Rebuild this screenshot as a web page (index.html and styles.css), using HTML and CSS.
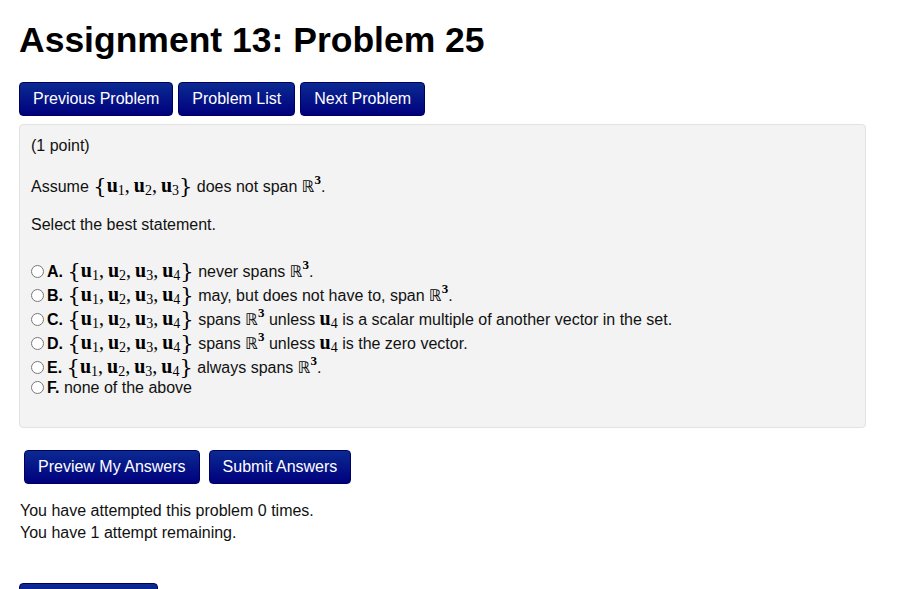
FILE: index.html
```html
<!DOCTYPE html>
<html lang="en">
<head>
  <meta charset="UTF-8">
  <title>Assignment 13: Problem 25</title>
  <link rel="stylesheet" href="styles.css">
</head>
<body>
  <h1>Assignment 13: Problem 25</h1>
  <div class="nav">
    <button class="btn">Previous Problem</button>
    <button class="btn">Problem List</button>
    <button class="btn">Next Problem</button>
  </div>

  <div class="problem">
    <p class="points">(1 point)</p>
    <p>Assume <span class="math"><span class="br">{</span><b>u</b><sub>1</sub><i>,</i><b>u</b><sub>2</sub><i>,</i><b>u</b><sub>3</sub><span class="br">}</span></span> does not span <span class="math"><span class="bb">ℝ</span><sup>3</sup></span>.</p>
    <p>Select the best statement.</p>

    <div class="choices">
      <label class="choice"><input type="radio" name="ans"><b class="letter">A.</b> <span class="math"><span class="br">{</span><b>u</b><sub>1</sub><i>,</i><b>u</b><sub>2</sub><i>,</i><b>u</b><sub>3</sub><i>,</i><b>u</b><sub>4</sub><span class="br">}</span></span> never spans <span class="math"><span class="bb">ℝ</span><sup>3</sup></span>.</label>
      <label class="choice"><input type="radio" name="ans"><b class="letter">B.</b> <span class="math"><span class="br">{</span><b>u</b><sub>1</sub><i>,</i><b>u</b><sub>2</sub><i>,</i><b>u</b><sub>3</sub><i>,</i><b>u</b><sub>4</sub><span class="br">}</span></span> may, but does not have to, span <span class="math"><span class="bb">ℝ</span><sup>3</sup></span>.</label>
      <label class="choice"><input type="radio" name="ans"><b class="letter">C.</b> <span class="math"><span class="br">{</span><b>u</b><sub>1</sub><i>,</i><b>u</b><sub>2</sub><i>,</i><b>u</b><sub>3</sub><i>,</i><b>u</b><sub>4</sub><span class="br">}</span></span> spans <span class="math"><span class="bb">ℝ</span><sup>3</sup></span> unless <span class="math"><b>u</b><sub>4</sub></span> is a scalar multiple of another vector in the set.</label>
      <label class="choice"><input type="radio" name="ans"><b class="letter">D.</b> <span class="math"><span class="br">{</span><b>u</b><sub>1</sub><i>,</i><b>u</b><sub>2</sub><i>,</i><b>u</b><sub>3</sub><i>,</i><b>u</b><sub>4</sub><span class="br">}</span></span> spans <span class="math"><span class="bb">ℝ</span><sup>3</sup></span> unless <span class="math"><b>u</b><sub>4</sub></span> is the zero vector.</label>
      <label class="choice"><input type="radio" name="ans"><b class="letter">E.</b> <span class="math"><span class="br">{</span><b>u</b><sub>1</sub><i>,</i><b>u</b><sub>2</sub><i>,</i><b>u</b><sub>3</sub><i>,</i><b>u</b><sub>4</sub><span class="br">}</span></span> always spans <span class="math"><span class="bb">ℝ</span><sup>3</sup></span>.</label>
      <label class="choice plain"><input type="radio" name="ans"><b class="letter">F.</b> none of the above</label>
    </div>
  </div>

  <div class="submit">
    <button class="btn">Preview My Answers</button>
    <button class="btn">Submit Answers</button>
  </div>

  <p class="attempts">You have attempted this problem 0 times.<br>You have 1 attempt remaining.</p>

  <div class="more">
    <button class="btn">Email Instructor</button>
  </div>
</body>
</html>
```

FILE: styles.css
```css
body {
  font-family: 'Liberation Sans', Arial, sans-serif;
  font-size: 16px;
  color: #111;
  margin: 0;
  padding: 0 19px;
  background: white;
}
h1 {
  font-size: 35.5px;
  font-weight: bold;
  color: #000;
  margin: 20px 0 22px;
  line-height: 40px;
}
.btn {
  font-family: 'Liberation Sans', Arial, sans-serif;
  font-size: 16px;
  color: white;
  background: linear-gradient(to bottom, #0b2a92, #00007d);
  border: 1px solid #000060;
  border-radius: 4px;
  height: 34px;
  padding: 0 13px;
  margin: 0;
  cursor: pointer;
}
.nav {
  display: flex;
  gap: 5px;
  margin-bottom: 8px;
}
.problem {
  max-width: 823px;
  background: #f3f3f3;
  border: 1px solid #e2e2e2;
  border-radius: 4px;
  padding: 11px 11px 29px;
}
.problem p {
  margin: 0 0 18px;
  line-height: 20px;
}
.problem p.points {
  margin-bottom: 19px;
}
.math {
  font-family: 'Liberation Serif', 'DejaVu Serif', serif;
  font-size: 20px;
  color: #000;
}
.math b {
  font-weight: bold;
}
.math i {
  font-style: normal;
  margin-right: 4px;
}
.math .br {
  font-size: 21px;
  font-family: 'DejaVu Serif', serif;
  vertical-align: -1px;
  line-height: 0;
}
.math sub {
  font-size: 14px;
  vertical-align: -3px;
  line-height: 0;
}
.math sup {
  font-size: 13px;
  font-weight: bold;
  vertical-align: 8px;
  line-height: 0;
}
.bb {
  font-family: 'DejaVu Sans', serif;
  font-size: 16px;
  font-weight: normal;
}
.choices {
  margin-top: 23px;
}
.choice {
  display: block;
  line-height: 24px;
  height: 24px;
  white-space: nowrap;
}
.choice.plain {
  line-height: 20px;
  height: 20px;
}
.choice input {
  margin: 0 3px 0 0;
  width: 13px;
  height: 13px;
  vertical-align: -1px;
}
.letter {
  color: #000;
}
.submit {
  display: flex;
  gap: 9px;
  margin: 22px 0 0 5px;
}
.attempts {
  margin: 16px 0 0 1px;
  line-height: 22px;
}
.more {
  margin-top: 39px;
}
```
